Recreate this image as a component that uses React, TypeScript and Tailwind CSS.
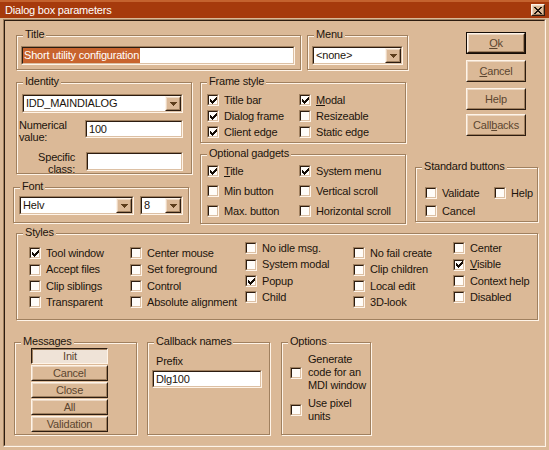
import React from "react";

const FONT = { fontFamily: '"Liberation Sans", Arial, sans-serif' };

function Check({ checked }: { checked?: boolean }) {
  return (
    <div className="w-[12px] h-[12px] shrink-0 border border-t-[#a0805f] border-l-[#a0805f] border-b-[#fff4e8] border-r-[#fff4e8]">
      <div className="w-full h-full border border-t-[#2c1c10] border-l-[#2c1c10] border-b-[#dcc0a4] border-r-[#dcc0a4] bg-[#fffcf8] flex items-center justify-center">
        {checked && (
          <svg width="7" height="7" viewBox="0 0 7 7" className="block">
            <path
              d="M0 2h1v3h-1z M1 3h1v3h-1z M2 4h1v3h-1z M3 3h1v3h-1z M4 2h1v3h-1z M5 1h1v3h-1z M6 0h1v3h-1z"
              fill="#140c06"
            />
          </svg>
        )}
      </div>
    </div>
  );
}

function CB({
  label,
  checked,
  className = "",
}: {
  label: React.ReactNode;
  checked?: boolean;
  className?: string;
}) {
  return (
    <div className={`flex items-center gap-[5px] whitespace-nowrap ${className}`}>
      <Check checked={checked} />
      <span>{label}</span>
    </div>
  );
}

function U({ children }: { children: React.ReactNode }) {
  return <span className="underline underline-offset-[1px]">{children}</span>;
}

function Group({
  label,
  className = "",
  children,
}: {
  label: string;
  className?: string;
  children?: React.ReactNode;
}) {
  return (
    <div
      className={`relative shrink-0 border border-[#a0805f] shadow-[inset_1px_1px_0_#fff4e8,1px_1px_0_#fff4e8] ${className}`}
    >
      <span className="absolute left-[6px] top-[-8px] px-[2px] bg-[#dbb997] leading-[13px] whitespace-nowrap">
        {label}
      </span>
      {children}
    </div>
  );
}

function Sunken({
  className = "",
  children,
}: {
  className?: string;
  children?: React.ReactNode;
}) {
  return (
    <div
      className={`shrink-0 border border-t-[#a0805f] border-l-[#a0805f] border-b-[#fff4e8] border-r-[#fff4e8] ${className}`}
    >
      <div className="w-full h-full border border-t-[#2c1c10] border-l-[#2c1c10] border-b-[#dcc0a4] border-r-[#dcc0a4] bg-white flex items-center overflow-hidden">
        {children}
      </div>
    </div>
  );
}

function Raised({
  className = "",
  innerClass = "",
  children,
}: {
  className?: string;
  innerClass?: string;
  children?: React.ReactNode;
}) {
  return (
    <div
      className={`shrink-0 border border-t-[#fff4e8] border-l-[#fff4e8] border-b-[#2c1c10] border-r-[#2c1c10] ${className}`}
    >
      <div
        className={`w-full h-full border border-t-[#ecd8c4] border-l-[#ecd8c4] border-b-[#a0805f] border-r-[#a0805f] bg-[#dbb997] flex items-center justify-center ${innerClass}`}
      >
        {children}
      </div>
    </div>
  );
}

function Arrow() {
  return (
    <svg width="7" height="4" viewBox="0 0 7 4" className="block">
      <path d="M0 0h7v1h-1v1h-1v1h-1v1h-1v-1h-1v-1h-1v-1h-1z" fill="#5e3e1c" />
    </svg>
  );
}

function Combo({ className, text }: { className: string; text: string }) {
  return (
    <Sunken className={className}>
      <span className="flex-1 pl-[2px] whitespace-nowrap overflow-hidden">{text}</span>
      <Raised className="w-[16px] h-full">
        <Arrow />
      </Raised>
    </Sunken>
  );
}

function Btn({
  children,
  className = "",
}: {
  children: React.ReactNode;
  className?: string;
}) {
  return (
    <Raised className={`text-[#5c4630] ${className}`}>
      {children}
    </Raised>
  );
}

function StyleCol({
  items,
  className = "",
}: {
  items: { l: React.ReactNode; c?: boolean }[];
  className?: string;
}) {
  const hs = ["h-[16px]", "h-[17px]", "h-[16px]", "h-[16px]"];
  return (
    <div className={`flex flex-col shrink-0 ${className}`}>
      {items.map((it, i) => (
        <CB key={i} label={it.l} checked={it.c} className={hs[i]} />
      ))}
    </div>
  );
}

export default function App() {
  return (
    <div
      className="w-[549px] h-[450px] bg-[#dbb997] flex flex-col text-[11px] text-[#1c140c] tracking-[-0.2px] overflow-hidden"
      style={FONT}
    >
      {/* Title bar */}
      <div className="h-[18px] shrink-0 bg-[#a63a0c] border-t-2 border-[#c4622e] flex items-center justify-between pl-[5px] pr-[4px]">
        <span className="text-white text-[11px] leading-[14px]">Dialog box parameters</span>
        <Raised className="w-[14px] h-[12px]">
          <svg width="8" height="7" viewBox="0 0 8 7" className="block">
            <path
              d="M0 0h2v1h-2z M6 0h2v1h-2z M1 1h2v1h-2z M5 1h2v1h-2z M2 2h4v1h-4z M3 3h2v1h-2z M2 4h4v1h-4z M1 5h2v1h-2z M5 5h2v1h-2z M0 6h2v1h-2z M6 6h2v1h-2z"
              fill="#1c140c"
            />
          </svg>
        </Raised>
      </div>

      {/* Client area */}
      <div className="flex-1 mt-[1px] mx-[3px] mb-[3px] border border-t-[#a0805f] border-l-[#a0805f] border-b-[#fff4e8] border-r-[#fff4e8]">
        <div className="w-full h-full border border-t-[#2c1c10] border-l-[#2c1c10] border-b-[#dcc0a4] border-r-[#dcc0a4] flex flex-col">
          {/* Top section */}
          <div className="flex mt-[14px] h-[198px] shrink-0">
            {/* Left block */}
            <div className="flex flex-col ml-[11px] w-[392px] shrink-0">
              <div className="flex">
                <Group label="Title" className="w-[285px] h-[35px] pl-[4px] pt-[10px]">
                  <Sunken className="w-[274px] h-[19px]">
                    <span className="h-full flex items-center bg-[#c8642e] text-white px-[1px] whitespace-nowrap">
                      Short utility configuration
                    </span>
                  </Sunken>
                </Group>
                <Group label="Menu" className="ml-[6px] w-[101px] h-[35px] pl-[4px] pt-[10px]">
                  <Combo className="w-[91px] h-[19px]" text="<none>" />
                </Group>
              </div>
              <div className="flex mt-[12px]">
                <div className="flex flex-col">
                  <Group label="Identity" className="w-[176px] h-[92px] pl-[5px] pt-[11px]">
                    <Combo className="w-[161px] h-[19px]" text="IDD_MAINDIALOG" />
                    <div className="flex items-start mt-[7px] -ml-[3px]">
                      <span className="w-[66px] leading-[12px] mt-[-1px]">
                        Numerical
                        <br />
                        value:
                      </span>
                      <Sunken className="w-[98px] h-[18px]">
                        <span className="pl-[2px]">100</span>
                      </Sunken>
                    </div>
                    <div className="flex items-start mt-[9px] -ml-[3px]">
                      <span className="w-[56px] leading-[12px] text-right mt-[-1px]">
                        Specific
                        <br />
                        class:
                      </span>
                      <Sunken className="ml-[11px] w-[97px] h-[19px]" />
                    </div>
                  </Group>
                  <Group label="Font" className="-ml-[3px] mt-[13px] w-[176px] h-[36px] pl-[5px] pt-[8px]">
                    <div className="flex">
                      <Combo className="w-[115px] h-[19px]" text="Helv" />
                      <Combo className="ml-[6px] w-[43px] h-[19px]" text="8" />
                    </div>
                  </Group>
                </div>
                <div className="flex flex-col ml-[8px]">
                  <Group label="Frame style" className="w-[206px] h-[61px] pl-[6px] pt-[9px]">
                    <div className="flex">
                      <div className="flex flex-col w-[92px]">
                        <CB className="h-[16px]" checked label="Title bar" />
                        <CB className="h-[16px]" checked label="Dialog frame" />
                        <CB className="h-[16px]" checked label="Client edge" />
                      </div>
                      <div className="flex flex-col">
                        <CB className="h-[16px]" checked label={<><U>M</U>odal</>} />
                        <CB className="h-[16px]" label="Resizeable" />
                        <CB className="h-[16px]" label="Static edge" />
                      </div>
                    </div>
                  </Group>
                  <Group label="Optional gadgets" className="mt-[11px] w-[206px] h-[70px] pl-[6px] pt-[6px]">
                    <div className="flex">
                      <div className="flex flex-col w-[92px]">
                        <CB className="h-[20px]" checked label={<><U>T</U>itle</>} />
                        <CB className="h-[20px]" label="Min button" />
                        <CB className="h-[20px]" label="Max. button" />
                      </div>
                      <div className="flex flex-col">
                        <CB className="h-[20px]" checked label="System menu" />
                        <CB className="h-[20px]" label="Vertical scroll" />
                        <CB className="h-[20px]" label="Horizontal scroll" />
                      </div>
                    </div>
                  </Group>
                </div>
              </div>
            </div>

            {/* Right block */}
            <div className="flex flex-col ml-[7px]">
              <div className="flex flex-col ml-[51px] mt-[-3px]">
                <div className="w-[60px] h-[22px] border border-[#140c06]">
                  <Btn className="w-full h-full">
                    <U>O</U>k
                  </Btn>
                </div>
                <Btn className="mt-[6px] w-[60px] h-[22px]">
                  <U>C</U>ancel
                </Btn>
                <Btn className="mt-[6px] w-[60px] h-[22px]">Help</Btn>
                <Btn className="mt-[4px] w-[60px] h-[22px]">
                  Call<U>b</U>acks
                </Btn>
              </div>
              <Group label="Standard buttons" className="mt-[31px] w-[123px] h-[55px] pl-[9px] pt-[16px]">
                <div className="flex">
                  <div className="flex flex-col w-[69px]">
                    <CB className="h-[18px]" label="Validate" />
                    <CB className="h-[18px]" label="Cancel" />
                  </div>
                  <CB className="h-[18px]" label="Help" />
                </div>
              </Group>
            </div>
          </div>

          {/* Styles */}
          <Group label="Styles" className="ml-[11px] w-[522px] h-[87px] flex">
            <StyleCol
              className="ml-[12px] mt-[11px] w-[101px]"
              items={[
                { l: "Tool window", c: true },
                { l: "Accept files" },
                { l: "Clip siblings" },
                { l: "Transparent" },
              ]}
            />
            <StyleCol
              className="mt-[11px] w-[115px]"
              items={[
                { l: "Center mouse" },
                { l: "Set foreground" },
                { l: "Control" },
                { l: "Absolute alignment" },
              ]}
            />
            <StyleCol
              className="mt-[6px] w-[108px]"
              items={[
                { l: "No idle msg." },
                { l: "System modal" },
                { l: "Popup", c: true },
                { l: "Child" },
              ]}
            />
            <StyleCol
              className="mt-[11px] w-[100px]"
              items={[
                { l: "No fail create" },
                { l: "Clip children" },
                { l: "Local edit" },
                { l: "3D-look" },
              ]}
            />
            <StyleCol
              className="mt-[6px]"
              items={[
                { l: "Center" },
                { l: <><U>V</U>isible</>, c: true },
                { l: "Context help" },
                { l: "Disabled" },
              ]}
            />
          </Group>

          {/* Bottom */}
          <div className="flex mt-[22px]">
            <Group label="Messages" className="ml-[9px] w-[123px] h-[93px] pl-[16px] pt-[5px]">
              <div className="flex flex-col gap-[1px]">
                <div className="w-[77px] h-[16px] border border-t-[#2c1c10] border-l-[#2c1c10] border-b-[#fff4e8] border-r-[#fff4e8]">
                  <div className="w-full h-full border-l border-t border-l-[#a0805f] border-t-[#a0805f] bg-[#efe3d7] flex items-center justify-center text-[#5c4630]">
                    Init
                  </div>
                </div>
                <Btn className="w-[77px] h-[16px]">Cancel</Btn>
                <Btn className="w-[77px] h-[16px]">Close</Btn>
                <Btn className="w-[77px] h-[16px]">All</Btn>
                <Btn className="w-[77px] h-[16px]">Validation</Btn>
              </div>
            </Group>
            <Group label="Callback names" className="ml-[10px] w-[123px] h-[93px] pl-[4px] pt-[11px]">
              <div className="ml-[4px] leading-[14px]">Prefix</div>
              <Sunken className="mt-[2px] w-[110px] h-[18px]">
                <span className="pl-[2px]">Dlg100</span>
              </Sunken>
            </Group>
            <Group label="Options" className="ml-[11px] w-[90px] h-[93px] pl-[8px] pt-[10px]">
              <div className="flex items-center gap-[6px]">
                <Check />
                <span className="leading-[13px]">
                  Generate
                  <br />
                  code for an
                  <br />
                  MDI window
                </span>
              </div>
              <div className="flex items-center gap-[6px] mt-[5px]">
                <Check />
                <span className="leading-[13px]">
                  Use pixel
                  <br />
                  units
                </span>
              </div>
            </Group>
          </div>
        </div>
      </div>
    </div>
  );
}
